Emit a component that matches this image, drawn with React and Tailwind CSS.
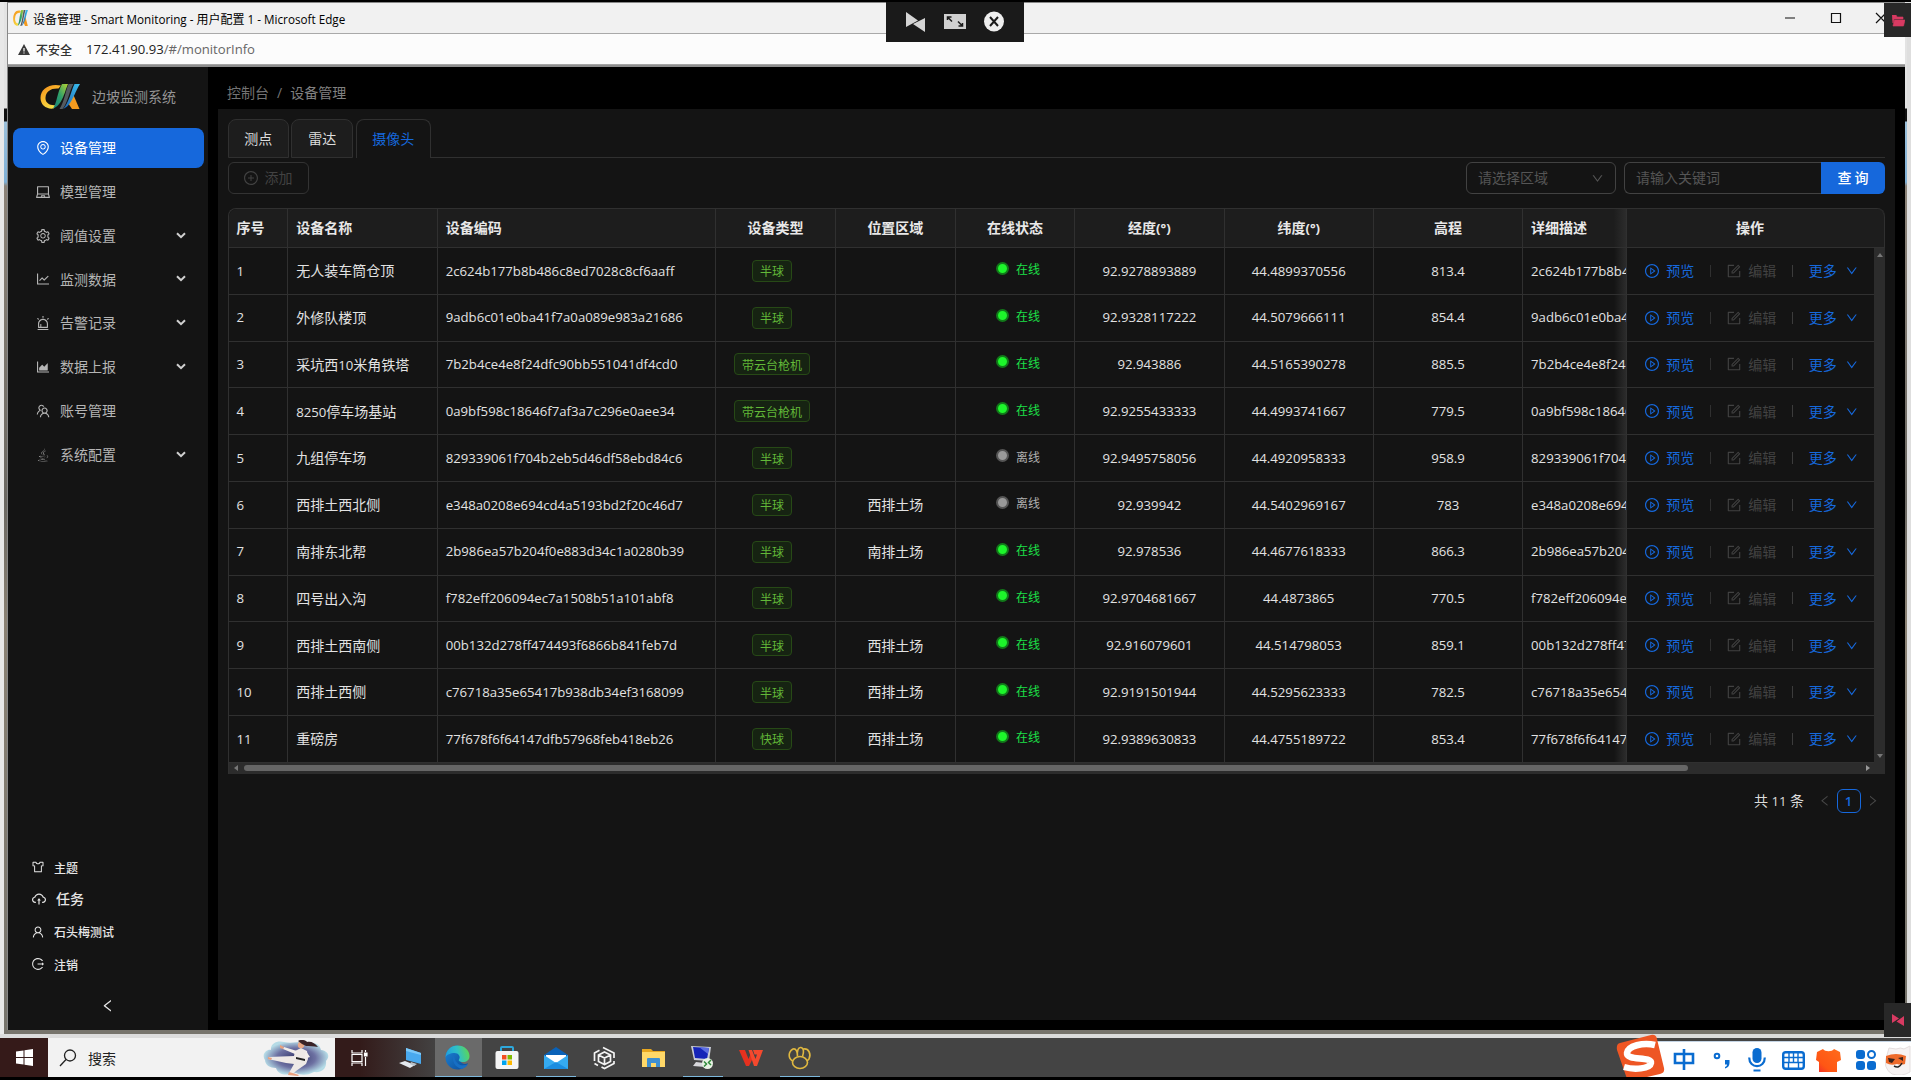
import React from "react";
import {
  AiOutlineEnvironment, AiOutlineLaptop, AiOutlineSetting, AiOutlineLineChart, AiOutlineAlert,
  AiOutlineAreaChart, AiOutlineTeam, AiOutlineJava, AiOutlineSkin, AiOutlineCloudUpload,
  AiOutlineUser, AiOutlineLogout, AiOutlinePlayCircle, AiOutlineForm, AiOutlinePlusCircle,
  AiOutlineDown, AiOutlineLeft, AiOutlineRight,
} from "react-icons/ai";

/* Latin runs use a slightly smaller size than the Chinese text beside them. */
function T({ children }) {
  return String(children).split(/([\x20-\x7e°]+)/).filter(Boolean).map((s, i) =>
    /^[\x20-\x7e°]/.test(s)
      ? <span key={i} className="whitespace-pre font-['Open_Sans','Noto_Sans',sans-serif] text-[0.943em]">{s}</span>
      : <span key={i}>{s}</span>
  );
}

const MENU = [
  ["设备管理", AiOutlineEnvironment, false],
  ["模型管理", AiOutlineLaptop, false],
  ["阈值设置", AiOutlineSetting, true],
  ["监测数据", AiOutlineLineChart, true],
  ["告警记录", AiOutlineAlert, true],
  ["数据上报", AiOutlineAreaChart, true],
  ["账号管理", AiOutlineTeam, false],
  ["系统配置", AiOutlineJava, true],
];

const ROWS = [
  ["无人装车筒仓顶", "2c624b177b8b486c8ed7028c8cf6aaff", "半球", "", 1, "92.9278893889", "44.4899370556", "813.4"],
  ["外修队楼顶", "9adb6c01e0ba41f7a0a089e983a21686", "半球", "", 1, "92.9328117222", "44.5079666111", "854.4"],
  ["采坑西10米角铁塔", "7b2b4ce4e8f24dfc90bb551041df4cd0", "带云台枪机", "", 1, "92.943886", "44.5165390278", "885.5"],
  ["8250停车场基站", "0a9bf598c18646f7af3a7c296e0aee34", "带云台枪机", "", 1, "92.9255433333", "44.4993741667", "779.5"],
  ["九组停车场", "829339061f704b2eb5d46df58ebd84c6", "半球", "", 0, "92.9495758056", "44.4920958333", "958.9"],
  ["西排土西北侧", "e348a0208e694cd4a5193bd2f20c46d7", "半球", "西排土场", 0, "92.939942", "44.5402969167", "783"],
  ["南排东北帮", "2b986ea57b204f0e883d34c1a0280b39", "半球", "南排土场", 1, "92.978536", "44.4677618333", "866.3"],
  ["四号出入沟", "f782eff206094ec7a1508b51a101abf8", "半球", "", 1, "92.9704681667", "44.4873865", "770.5"],
  ["西排土西南侧", "00b132d278ff474493f6866b841feb7d", "半球", "西排土场", 1, "92.916079601", "44.514798053", "859.1"],
  ["西排土西侧", "c76718a35e65417b938db34ef3168099", "半球", "西排土场", 1, "92.9191501944", "44.5295623333", "782.5"],
  ["重磅房", "77f678f6f64147dfb57968feb418eb26", "快球", "西排土场", 1, "92.9389630833", "44.4755189722", "853.4"],
];

const COLS = "grid grid-cols-[59.700px_149.5px_278.5px_119.8px_119.8px_119.4px_149.4px_149.3px_149.2px_102.8px_1fr]";
const CELL = "flex items-center overflow-hidden whitespace-nowrap border-b border-r border-[#303030] px-2";

function Logo({ className, id }) {
  return (
    <svg viewBox="0 0 40 25" className={className} preserveAspectRatio="none">
      <defs>
        <linearGradient id={id + "A"} x1="0" y1="0" x2="0.6" y2="1">
          <stop offset="0" stopColor="#f08a1c" /><stop offset="0.5" stopColor="#f9b82c" /><stop offset="1" stopColor="#f3e04a" />
        </linearGradient>
        <linearGradient id={id + "B"} x1="1" y1="0" x2="0" y2="1">
          <stop offset="0" stopColor="#b7d433" /><stop offset="0.5" stopColor="#2fa06a" /><stop offset="1" stopColor="#15807c" />
        </linearGradient>
        <linearGradient id={id + "C"} x1="1" y1="0" x2="0" y2="1">
          <stop offset="0" stopColor="#3ac0f0" /><stop offset="1" stopColor="#1c5fae" />
        </linearGradient>
      </defs>
      <path d="M33 10l6.500 15h-7.500l-4-6z" fill="#f39a1f" />
      <path d="M21 1.500C9 -1 0.500 5 0.500 14c0 7 6 11.500 13 10.500l3-3.500C10 22 5 19 5.500 13.500c.5-6 5-9.500 13-9z" fill={`url(#${id}A)`} />
      <path d="M22 0h6c-3 6-5 21-15 24.500C17 19 17 9 22 0z" fill={`url(#${id}B)`} />
      <path d="M28.500 0h5c-4 6-6 20-11 25h-3c5-8 6-18 9-25z" fill="#545b60" />
      <path d="M34.500 0H40c-5 7-8 22-17 25 6-6 8-18 11.500-25z" fill={`url(#${id}C)`} />
    </svg>
  );
}

function L({ children }) {
  return <span className="font-['Open_Sans',sans-serif] text-[11.700px]">{children}</span>;
}

function TitleBar() {
  return (
    <header className="flex h-[31px] shrink-0 items-center border-b border-[#a9a9a9] bg-[#f1f1f1] pl-[5px] text-black">
      <Logo id="fav" className="h-4 w-[15px]" />
      <span className="ml-[5px] flex-1 whitespace-pre pt-px text-[12px]">设备管理<L> - Smart Monitoring - </L>用户配置<L> 1 - Microsoft Edge</L></span>
      <svg width="102" height="14" viewBox="0 0 102 14" fill="none" stroke="#111" strokeWidth="1.200" className="mr-[18px]">
        <path d="M0 7h10M46.500 2.500h9v9h-9zM91 2l10 10M101 2L91 12" />
      </svg>
    </header>
  );
}

function AddressBar() {
  return (
    <div className="flex h-[31px] shrink-0 items-center border-b border-[#a5a5a5] bg-[#fcfcfc] text-[12px] text-[#222]">
      <svg width="12" height="11" viewBox="0 0 12 11" className="ml-[10px]"><path d="M6 0l6 11H0z" fill="#3a3a3a" /><path d="M6 4v3.500M6 8.500v1" stroke="#fff" strokeWidth="1.200" /></svg>
      <span className="ml-[6px] font-medium text-[#333]">不安全</span>
      <span className="ml-[14px] font-['Open_Sans',sans-serif] text-[13.100px]">172.41.90.93<span className="text-[#666]">/#/monitorInfo</span></span>
    </div>
  );
}

function Sidebar() {
  return (
    <aside className="flex w-[200px] shrink-0 flex-col bg-[#141414] text-[14px] text-[#b5b5b5]">
      <div className="flex h-[61px] items-center pb-[2px] pl-8 text-[#949494]">
        <Logo id="brand" className="h-[25px] w-10" />
        <span className="ml-3">边坡监测系统</span>
      </div>
      <nav className="flex flex-col gap-[3.8px] pl-[4.500px] pr-1">
        {MENU.map(([name, Icon, sub], i) => (
          <div key={name} className={i === 0 ? "flex h-10 items-center rounded-lg bg-[#1668dc] pl-[22.500px] pr-4 text-white" : "flex h-10 items-center pl-[22.500px] pr-4"}>
            <Icon className={i === 7 ? "size-4 opacity-70" : "size-4"} />
            <span className="ml-[9px] flex-1">{name}</span>
            {sub && <svg width="10" height="7" viewBox="0 0 10 7" className="mr-[2.5px] mb-px"><path d="M1 1.200l4 4 4-4" fill="none" stroke="#d0d0d0" strokeWidth="2" /></svg>}
          </div>
        ))}
      </nav>
      <div className="mt-auto flex flex-col text-[12px] font-medium text-[#e6e6e6]">
        <div className="flex h-8 items-center pl-[23px]"><AiOutlineSkin className="size-[14px]" /><span className="ml-[9px]">主题</span></div>
        <div className="flex h-8 items-center pl-[23px] text-[14px]"><AiOutlineCloudUpload className="size-4" /><span className="ml-[9px]">任务</span></div>
        <div className="flex h-[33px] items-center pl-[23px]"><AiOutlineUser className="size-[14px]" /><span className="ml-[9px]">石头梅测试</span></div>
        <div className="flex h-8 items-center pl-[23px]"><AiOutlineLogout className="size-[14px]" /><span className="ml-[9px]">注销</span></div>
      </div>
      <div className="flex h-[50px] items-center justify-center pt-px"><AiOutlineLeft className="size-[15.500px] text-[#e6e6e6]" /></div>
    </aside>
  );
}

function Tabs() {
  return (
    <div className="flex h-[39.5px] items-stretch gap-[2.700px] text-[14px] text-[#dcdcdc]">
      <div className="flex w-[61.300px] items-center justify-center rounded-t-lg border border-[#303030] bg-[#1d1d1d]">测点</div>
      <div className="flex w-[61.500px] items-center justify-center rounded-t-lg border border-[#303030] bg-[#1d1d1d]">雷达</div>
      <div className="flex w-[75px] items-center justify-center rounded-t-lg border border-b-0 border-[#303030] text-[#1668dc]">摄像头</div>
      <div className="-ml-[2.700px] flex-1 border-b border-[#303030]" />
    </div>
  );
}

function Toolbar() {
  return (
    <div className="mt-1 flex h-8 items-center text-[14px]">
      <button className="flex h-8 w-[81.500px] items-center rounded-md border border-[#333] pl-[14px] text-[#424242]"><AiOutlinePlusCircle className="size-4" /><span className="ml-[6px]">添加</span></button>
      <div className="ml-auto flex h-8 w-[150px] items-center justify-between rounded-md border border-[#424242] px-[11px] text-[#555]"><span>请选择区域</span><AiOutlineDown className="size-[13px]" /></div>
      <div className="ml-2 flex h-8 w-[197px] items-center rounded-l-md border border-r-0 border-[#424242] pl-[11px] text-[#555]">请输入关键词</div>
      <button className="h-8 w-16 rounded-r-md bg-[#1668dc] text-center font-medium text-white">查 询</button>
    </div>
  );
}

function Actions() {
  return (
    <div className="flex items-center whitespace-nowrap border-b border-l border-[#303030] pl-[17px] text-[14px] text-[#1668dc]">
      <AiOutlinePlayCircle className="size-4" /><span className="ml-[6.500px]">预览</span>
      <i className="ml-4 h-3 w-px bg-[#303030]" />
      <span className="ml-[15px] flex items-center text-[#424242]"><AiOutlineForm className="size-4" /><span className="ml-[6px]">编辑</span></span>
      <i className="ml-4 h-3 w-px bg-[#3c3c3c]" />
      <span className="ml-[15.500px]">更多</span><AiOutlineDown className="ml-[8px] size-[13.500px]" />
    </div>
  );
}

const C = CELL + " justify-center";

function DeviceTable() {
  return (
    <div className="mt-[14px] rounded-t-lg border-l border-t border-[#303030] text-[14px] text-[#e2e2e2]">
      <div className={COLS + " h-[39px] overflow-hidden rounded-t-lg border-r border-[#303030] bg-[#1d1d1d] font-bold text-[#e8e8e8]"}>
        <div className={CELL}>序号</div><div className={CELL}>设备名称</div><div className={CELL}>设备编码</div>
        <div className={C}>设备类型</div><div className={C}>位置区域</div><div className={C}>在线状态</div>
        <div className={C}><T>经度(°)</T></div><div className={C}><T>纬度(°)</T></div><div className={C}>高程</div>
        <div className="flex items-center overflow-hidden whitespace-nowrap border-b border-[#303030] bg-[linear-gradient(90deg,transparent_88%,#2c2c2c)] px-2">详细描述</div>
        <div className="flex items-center justify-center border-b border-l border-[#303030] pr-[11px]">操作</div>
      </div>
      <div className="flex">
        <div className="flex-1">
          {ROWS.map(([name, code, type, area, on, lng, lat, alt], i) => (
            <div key={code} className={COLS + " h-[46.800px]"}>
              <div className={CELL}><T>{i + 1}</T></div>
              <div className={CELL}><span><T>{name}</T></span></div>
              <div className={CELL}><T>{code}</T></div>
              <div className={C}><span className="mr-[7px] flex h-[22px] items-center rounded border border-[#274916] bg-[#162312] px-[7px] text-[12px] text-[#62b838]">{type}</span></div>
              <div className={C}>{area}</div>
              <div className={C}>
                <span className={on ? "mb-[5px] ml-[6px] size-[13px] rounded-full border-2 border-[#127a1a] bg-[#1df52b]" : "mb-[5px] ml-[6px] size-[13px] rounded-full border-2 border-[#555] bg-[#999]"} />
                <span className={on ? "mb-[4px] ml-[7px] text-[12px] text-[#1ce048]" : "mb-[4px] ml-[7px] text-[12px] text-[#b0b0b0]"}>{on ? "在线" : "离线"}</span>
              </div>
              <div className={C}><T>{lng}</T></div><div className={C}><T>{lat}</T></div><div className={C}><T>{alt}</T></div>
              <div className="relative flex items-center overflow-hidden whitespace-nowrap border-b border-[#303030] pl-2">
                <T>{code}</T><i className="absolute inset-y-0 right-0 w-3 bg-gradient-to-r from-transparent to-white/10" />
              </div>
              <Actions />
            </div>
          ))}
        </div>
        <div className="flex w-[11px] flex-col items-center justify-between bg-[#2c2c2c] py-[5px]">
          <i className="border-x-[3px] border-b-4 border-x-transparent border-b-[#777]" />
          <i className="border-x-[3px] border-t-4 border-x-transparent border-t-[#777]" />
        </div>
      </div>
      <div className="flex h-[11px] items-center bg-[#2c2c2c] pl-[5px] pr-[15px]">
        <i className="border-y-[3px] border-r-4 border-y-transparent border-r-[#777]" />
        <i className="ml-[6px] h-[6px] w-[1444px] rounded-full bg-[#666]" />
        <i className="ml-auto border-y-[3px] border-l-4 border-y-transparent border-l-[#999]" />
      </div>
    </div>
  );
}

function Task({ children, line, active }) {
  return (
    <div className={"flex h-[39px] w-[48.9px] flex-col " + (active ? "bg-[linear-gradient(90deg,transparent_2px,#6a6a6a_2px)]" : "")}>
      <div className="flex flex-1 items-center justify-center pl-px pt-[2px]">{children}</div>
      <i className={line ? (active ? "ml-[2px] h-[1.500px] bg-[#7db8dc]" : "mx-auto h-[1.500px] w-10 translate-x-px bg-[#7db8dc]") : "h-[1.500px]"} />
    </div>
  );
}

function Edge() {
  return (
    <svg width="25" height="25" viewBox="0 0 25 25">
      <defs>
        <linearGradient id="e1" x1="0" y1="0.500" x2="1" y2="0.300"><stop offset="0" stopColor="#1f9fe0" /><stop offset="0.500" stopColor="#2fc0c8" /><stop offset="1" stopColor="#5fd84e" /></linearGradient>
        <linearGradient id="e2" x1="0" y1="0" x2="1" y2="1"><stop offset="0" stopColor="#1c86d8" /><stop offset="1" stopColor="#0c4a98" /></linearGradient>
      </defs>
      <path d="M12.500 24.500A12 12 0 1 1 12.500.5C18 .5 16 14 15 16c2 3 5 4 8 2-2 4-6 6.500-10.500 6.500z" fill="url(#e2)" />
      <path d="M.5 12.500C1 5 6 .5 12.500.5c7 0 12 5 12 10.500 0 4-3 6-6.500 6-3 0-5-1.200-4-2.500 2-3-.5-6.500-4.500-6.500-4 0-8 1.500-9 4.500z" fill="url(#e1)" />
      <path d="M9 10c-3 5 1 13 8 14 3-1 5-3 6-5-6 3-13 1-14-9z" fill="#176fc4" />
    </svg>
  );
}

function Taskbar() {
  return (
    <footer className="relative flex h-[39px] shrink-0 bg-[linear-gradient(90deg,#331b1a_0,#331b1a_360px,#444_440px)]">
      <div className="flex w-12 items-center justify-center bg-[#351a19]">
        <svg width="17" height="17" viewBox="0 0 17 17" fill="#fff"><path d="M0 2.500l7.500-1v6.500H0zM8.500 1.300L17 0v8H8.500zM0 9h7.500v6.500l-7.500-1zM8.500 9H17v8l-8.500-1.300z" /></svg>
      </div>
      <div className="flex w-[287px] items-center bg-[#f2f2f2] pl-[11px] text-[14px] text-[#222]">
        <svg width="18" height="18" viewBox="0 0 18 18" fill="none" stroke="#222" strokeWidth="1.300"><circle cx="11" cy="6.500" r="5.500" /><path d="M7 10.500L1 17" /></svg>
        <span className="ml-[11px] flex-1 pt-[2px]">搜索</span>
        <svg width="68" height="36" viewBox="0 0 68 36" className="mr-[5px]">
          <defs><radialGradient id="ka"><stop offset="0" stopColor="#34366a" /><stop offset="0.600" stopColor="#6d71a2" /><stop offset="1" stopColor="#b5dbe6" /></radialGradient></defs>
          <path d="M3 20c-4-6 2-11 6-10C8 3 16 0 22 2c8 2 14-1 22 0 8 0 14 2 15 8 8 1 9 7 5 11 1 8-5 12-12 11-8 4-14 3-18 1-10 3-18 2-20-5-6 0-11-3-11-8z" fill="url(#ka)" />
          <path d="M33 11l6-3 6 3 1 8-2 5-10 7-3 3-4-1 5-9-8-1-18-4 1-2 25-1z" fill="#eee9e6" />
          <path d="M33 14L21 9l1-2 13 4zM44 11l4 6-6 2z" fill="#f3eeea" /><path d="M34 17l9 2v2l-9-2z" fill="#222" />
          <path d="M6 17l4 1-1 2-3-1zM18 5l4 2-1 2-3-1zM27 32l10 3-1 1-10-1z" fill="#e9a07e" />
          <circle cx="39" cy="5" r="3.200" fill="#e9a988" /><path d="M36 1c3-2 8-1 9 1 4-1 8 1 11 5-5-1-9-1-12-1l-4-2z" fill="#3a2327" />
        </svg>
      </div>
      <div className="flex">
        <Task><svg width="17" height="16" viewBox="0 0 17 16" fill="none" stroke="#fff" strokeWidth="1.200" className="mr-px"><path d="M1 0v3h10V0M1 16v-3h10v3M1 4.500h10v7H1zM14.500 0v2M14.500 7v9" /><path d="M13.500 3h2.500v3h-2.500z" fill="#fff" /></svg></Task>
        <Task><svg width="24" height="22" viewBox="0 0 24 22" className="ml-[2px]"><path d="M8 1l15 5v11L8 13z" fill="#49a9ee" /><path d="M8 1l15 5v2L8 4z" fill="#7cc8f8" /><path d="M1 16l6-2 10 4-5 3z" fill="#e4e9ee" /><path d="M13 15l6 2-3 2-4-2z" fill="#b8c2ca" /></svg></Task>
        <Task active line><Edge /></Task>
        <Task><svg width="24" height="24" viewBox="0 0 24 24"><path d="M6 6V2q0-1 1-1h10q1 0 1 1v4" fill="none" stroke="#2ea8dc" strokeWidth="2" /><rect x="0.500" y="5" width="23" height="18" rx="2" fill="#f5f5f5" /><path d="M7 9h4.500v4.500H7z" fill="#f25022" /><path d="M12.500 9H17v4.500h-4.500z" fill="#7fba00" /><path d="M7 14.500h4.500V19H7z" fill="#00a4ef" /><path d="M12.500 14.500H17V19h-4.500z" fill="#ffb900" /></svg></Task>
        <Task line><svg width="24" height="22" viewBox="0 0 24 22"><path d="M0 8l12-8 12 8v3H0z" fill="#0a62b8" /><path d="M2 8h20v4l-10 6L2 12z" fill="#fff" /><path d="M0 8l12 8 12-8v14H0z" fill="#35aaf0" /><path d="M0 22l12-7 12 7z" fill="#1b8de0" /></svg></Task>
        <Task><svg width="23" height="24" viewBox="0 0 23 24" fill="none" stroke="#f4f4f4" strokeWidth="1.700"><path d="M11.500 6l6 3v6.500l-6 3-6-3V9zM5.500 9l6 3 6-3M11.500 12v6M10 1.500l11 5.500v5M1.500 15V7l5-2.800M21 15v2.500l-9.500 5-3-1.500M1.500 17.500l3.500 2" /></svg></Task>
        <Task><svg width="23" height="20" viewBox="0 0 23 20"><path d="M0 1h9l2 2h12v16H0z" fill="#e9a820" /><path d="M0 4h23v15H0z" fill="#ffd868" /><path d="M5 11q0-1 1-1h11q1 0 1 1v8h-4v-4H9v4H5z" fill="#3f8fd0" /></svg></Task>
        <Task line><svg width="24" height="25" viewBox="0 0 24 25"><path d="M1 1l20 1-2 14-15-1z" fill="#c9ccd6" /><path d="M3 2l16 1-2 11-12-1z" fill="#1524b8" /><path d="M9 2l10 1-1 6z" fill="#5a6ce0" /><path d="M6 17l8 1 1 4-12-1z" fill="#d8d8dc" /><circle cx="17.500" cy="18.500" r="5.500" fill="#e8f2e4" /><path d="M14 16.500l2.500 2.500L14 21.500M21 15l-2.500 2.500L21 20" fill="none" stroke="#2f8a3a" strokeWidth="1.500" /></svg></Task>
        <Task><svg width="24" height="17" viewBox="0 0 24 17"><path d="M0 1h6l3.500 9L12 4l2 5-4 8H7z" fill="#e6311f" /><path d="M9.500 1H13l3.500 9L18 5.500h-2.500L14 1h10l-6 16h-3z" fill="#f4492e" /></svg></Task>
        <Task line><svg width="24" height="24" viewBox="0 0 24 24" fill="none" stroke="#e0b840" strokeWidth="1.600"><ellipse cx="12" cy="16.500" rx="7.500" ry="6" /><path d="M4.500 15C0 12 0 6 5 3c3-1 4.500 3 4.500 7M9.500 10C9 5 10 1 13 1.500s3 5 1.500 9M15.500 3c5-1 8 5 5.500 10l-2 2" /></svg></Task>
      </div>
      <div className="ml-auto flex h-[38px] w-[274px] translate-y-[3px] items-center rounded-l-lg border-y border-[#c4d4e4] bg-white pl-[26px]">
        <svg width="22" height="22" viewBox="0 0 22 22" fill="none" stroke="#0a6cd0" strokeWidth="2.600" className="ml-[10px]"><path d="M11 0v21M2 5h18v9H2z" /></svg>
        <svg width="18" height="17" viewBox="0 0 18 17" className="ml-[18px]"><circle cx="4" cy="4" r="2.300" fill="none" stroke="#0a6cd0" strokeWidth="2" /><path d="M12 8h4.500v3c0 3-2 5-4.500 5.500v-1.500c1.500-.5 2-1.500 2-2.500h-2z" fill="#0a6cd0" /></svg>
        <svg width="18" height="24" viewBox="0 0 18 24" className="ml-[17px]"><rect x="4.500" y="0" width="9" height="15" rx="4.500" fill="#0a6cd0" /><path d="M1.200 9.500C1.200 21 16.800 21 16.800 9.500M5.500 22.500h7" fill="none" stroke="#0a6cd0" strokeWidth="2.200" /></svg>
        <svg width="23" height="19" viewBox="0 0 23 19" fill="none" stroke="#0a6cd0" className="ml-[16px]"><rect x="1.200" y="1.200" width="20.600" height="16.500" rx="2.500" strokeWidth="2.400" /><path d="M2 6.500h19M2 11.500h19M7 2v10M11.500 2v10M16 2v10M6.500 12v5M16.500 12v5" strokeWidth="1.400" /></svg>
        <svg width="25" height="23" viewBox="0 0 25 23" className="ml-[11px]"><defs><linearGradient id="sh" x1="0" y1="1" x2="1" y2="0"><stop offset="0" stopColor="#f02a2a" /><stop offset="0.300" stopColor="#ff5614" /><stop offset="1" stopColor="#ff6c1c" /></linearGradient></defs><path d="M7 0c2 3 9 3 11 0l6 3 1 8-4 2v10H3V13l-3-2 1-8z" fill="url(#sh)" /></svg>
        <svg width="20" height="20" viewBox="0 0 20 20" fill="#0a6cd0" className="ml-[15px] shrink-0"><rect width="9" height="9" rx="3" /><rect x="12" y="1" width="7" height="7" rx="3.500" fill="none" stroke="#0a6cd0" strokeWidth="2" /><rect y="11" width="9" height="9" rx="3" /><rect x="11" y="11" width="9" height="9" rx="3" /></svg>
        <svg width="26" height="30" viewBox="0 0 26 30" className="ml-[9px] shrink-0"><path d="M2 10l2-7 7 1q5-2 8 0l6-3v26q-8 5-18 2-10-6-5-19z" fill="#f6f2f2" stroke="#e4dede" /><path d="M1 11q10-4 20 0l-1 8q-4 1-8 0-6 2-11-1z" fill="#ee6a2a" /><path d="M3 13l7 1-3 4-3-1zM13 13l5-1v4z" fill="#38221c" /><path d="M9 21q5 3 8-3" fill="none" stroke="#222" strokeWidth="1.500" /></svg>
      </div>
      {/* Input-method logo overhanging the bar */}
      <svg width="50" height="46" viewBox="0 0 50 46" className="absolute -top-[4px] right-[245px]">
        <path d="M4 9L35 1q5-1 6 4l7 29q1 5-4 6l-26 6q-6 1-8-4L1 16Q0 10 4 9z" fill="#ee5624" />
        <path d="M39 11C27 8 12 12 11 19c-1 8 25 3 24 10-1 6-17 7-27 4" fill="none" stroke="#fff" strokeWidth="6.500" />
      </svg>
    </footer>
  );
}

export default function App() {
  return (
    <div className="relative flex h-[1080px] w-[1911px] flex-col overflow-hidden border-y-[3px] border-t-[2px] border-black bg-[#e4e4e4] font-['Noto_Sans_CJK_SC','Open_Sans',sans-serif] leading-tight">
      <div className="flex h-[1032px] shrink-0 bg-[linear-gradient(#e3e3e3_0,#e3e3e3_106px,#101010_107px,#101010_119px,#9cc0da_120px,#7fb0d6_180px,#8c8378_184px,#6b6862_500px,#8b8274_620px,#77746c_1000px)]">
        <div className="w-1 bg-[#e8e8e8]" />
        <div className="ml-[3px] flex h-[1028px] w-[1898px] flex-col border-l border-t border-[#888] bg-black">
          <TitleBar />
          <AddressBar />
          <div className="flex min-h-0 flex-1 border-t-2 border-[#8d8d8d]">
            <Sidebar />
            <main className="ml-[10px] flex w-[1677px] flex-col">
              <div className="flex h-[41.500px] items-center pl-[9px] pt-[10px] text-[14px] text-[#737373]">
                控制台<span className="mx-2 font-['Open_Sans',sans-serif]">/</span><span className="text-[#808080]">设备管理</span>
              </div>
              <section className="mb-[10px] flex-1 bg-[#141414] pl-[9.500px] pr-[10px] pt-[10px]">
                <Tabs />
                <Toolbar />
                <DeviceTable />
                <div className="mt-[15px] flex h-6 items-center justify-end pr-[6px] text-[14px] text-[#dcdcdc]">
                  <span><T>共 11 条</T></span>
                  <AiOutlineLeft className="ml-[14px] size-[13.500px] text-[#484848]" />
                  <span className="ml-[5px] flex size-6 items-center justify-center rounded-md border border-[#1668dc] font-['Open_Sans',sans-serif] text-[13.200px] font-semibold text-[#1668dc]">1</span>
                  <AiOutlineRight className="ml-[5px] size-[13.500px] text-[#484848]" />
                </div>
              </section>
            </main>
          </div>
        </div>
        <div className="ml-auto w-1 bg-[#dedede]" />
      </div>
      <div className="h-1 shrink-0 bg-[#dcdcdc]" />
      <Taskbar />

      {/* Remote-session toolbar and edge handles floating over the window */}
      <div className="absolute left-[886px] top-0 flex h-10 w-[138px] items-center justify-center bg-[#1a1a1a]">
        <svg width="100" height="22" viewBox="0 0 100 22" className="ml-[2px]">
          <path d="M0 1l12 8.500L0 16zM19 7v14L7 13z" fill="#d4d4d4" />
          <rect x="38" y="3" width="22" height="15" fill="#d0d0d0" />
          <path d="M41.500 9V6h4M42 6.500l4 4M56.500 12v3h-4M56 14.500l-4-4" fill="none" stroke="#1a1a1a" strokeWidth="1.500" />
          <circle cx="88" cy="10.500" r="10" fill="#eee" /><path d="M84 6l8 9M92 6l-8 9" stroke="#1a1a1a" strokeWidth="2" />
        </svg>
      </div>
      <div className="absolute right-0 top-px flex h-[34px] w-[27px] items-center justify-center bg-[#282828]">
        <svg width="13" height="12" viewBox="0 0 13 12" className="ml-px mt-[2px]"><path d="M0 0h4l1 2h6v2H2L1 8zM2.500 5H13l-1.500 6H1z" fill="#d83a62" stroke="#d83a62" strokeWidth="0.600" /></svg>
      </div>
      <div className="absolute bottom-[40px] right-0 flex h-[34px] w-[27px] items-center justify-center bg-[#282828]">
        <svg width="12" height="12" viewBox="0 0 12 12"><path d="M0 0l7 4.500L0 9zM12 2v10L4.500 7.500z" fill="#d83a62" /></svg>
      </div>
    </div>
  );
}
